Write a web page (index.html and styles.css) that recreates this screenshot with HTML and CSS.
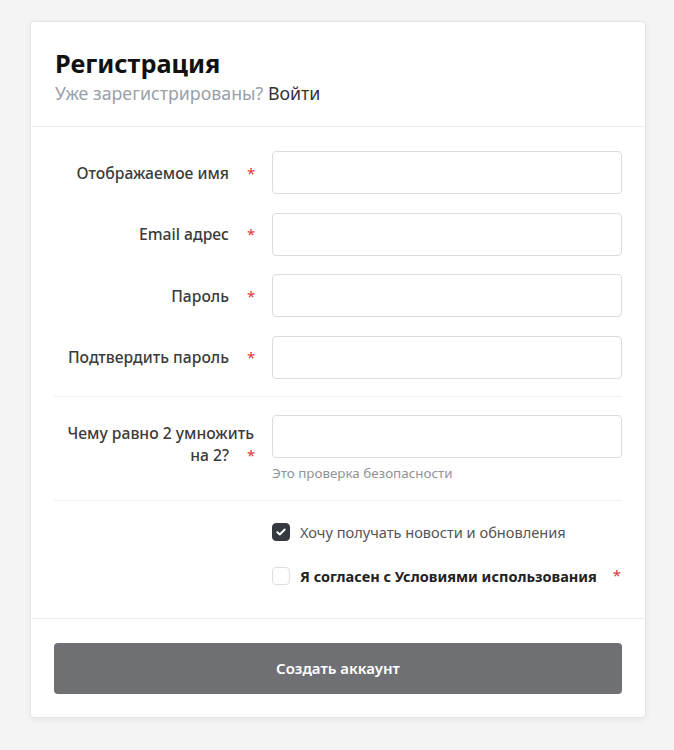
FILE: index.html
```html
<!DOCTYPE html>
<html lang="ru">
<head>
<meta charset="utf-8">
<title>Регистрация</title>
<link rel="stylesheet" href="styles.css">
</head>
<body>
<div class="card">
  <div class="card-header">
    <h1 class="title">Регистрация</h1>
    <div class="subtitle">Уже зарегистрированы? <a class="login" href="#">Войти</a></div>
  </div>
  <form class="card-body">
    <div class="group">
      <div class="row">
        <label class="label">Отображаемое имя<span class="req">*</span></label>
        <div class="field"><input class="input" type="text"></div>
      </div>
      <div class="row">
        <label class="label">Email адрес<span class="req">*</span></label>
        <div class="field"><input class="input" type="email"></div>
      </div>
      <div class="row">
        <label class="label">Пароль<span class="req">*</span></label>
        <div class="field"><input class="input" type="password"></div>
      </div>
      <div class="row">
        <label class="label">Подтвердить пароль<span class="req">*</span></label>
        <div class="field"><input class="input" type="password"></div>
      </div>
    </div>
    <div class="group group-captcha">
      <div class="row row-top">
        <label class="label label-multi">Чему равно 2 умножить<br>на 2?<span class="req">*</span></label>
        <div class="field">
          <input class="input" type="text">
          <div class="help">Это проверка безопасности</div>
        </div>
      </div>
    </div>
    <div class="group group-checks">
      <div class="check-row">
        <span class="box box-checked">
          <svg width="10" height="8" viewBox="0 0 10 8"><path d="M1.3 4.2 L3.8 6.5 L8.7 1.5" fill="none" stroke="#fff" stroke-width="1.9" stroke-linecap="round" stroke-linejoin="round"/></svg>
        </span>
        <span class="check-text">Хочу получать новости и обновления</span>
      </div>
      <div class="check-row">
        <span class="box"></span>
        <span class="check-text check-strong">Я согласен с Условиями использования</span>
        <span class="req req-check">*</span>
      </div>
    </div>
  </form>
  <div class="card-footer">
    <button class="btn" type="button">Создать аккаунт</button>
  </div>
</div>
</body>
</html>
```

FILE: styles.css
```css
* { box-sizing: border-box; }
html, body { margin: 0; }
body {
  background: #f4f4f4;
  font-family: "Noto Sans", "Open Sans", sans-serif;
  padding: 21px 28px 30px 30px;
}
.card {
  width: 616px;
  background: #fff;
  border: 1px solid #e4e4e4;
  border-radius: 4px;
  box-shadow: 0 2px 6px rgba(0,0,0,0.06);
}
.card-header {
  padding: 23px 24px 21px;
  border-bottom: 1px solid #ededed;
}
.title {
  margin: 0;
  font-size: 25.3px;
  font-weight: 700;
  line-height: 36px;
  color: #111;
}
.subtitle {
  font-size: 17.8px;
  line-height: 24px;
  color: #9aa0a8;
}
.login { color: #333; text-decoration: none; }
.card-body {
  margin: 0;
  padding: 0 23px 0 23px;
}
.group {
  display: flex;
  flex-direction: column;
  gap: 18.5px;
  padding: 24px 0 17px;
  border-bottom: 1px solid #f0f0f0;
}
.group-captcha { padding: 18px 0 19px; }
.group-checks {
  border-bottom: none;
  padding: 21px 0 32px;
  gap: 24px;
}
.row {
  display: flex;
  align-items: center;
  gap: 18px;
}
.row-top { align-items: flex-start; }
.label {
  width: 200px;
  flex: none;
  font-size: 15.7px;
  font-weight: 500;
  line-height: 22px;
  color: #3b3b3b;
  text-align: right;
}
.label-multi { padding-top: 7px; }
.req {
  display: inline-block;
  width: 7px;
  margin-left: 18px;
  color: #d9383a;
  font-size: 15px;
  font-weight: 400;
  line-height: 1;
  text-align: left;
}
.field { flex: 1; }
.input {
  display: block;
  width: 100%;
  height: 43px;
  border: 1px solid #dcdcdc;
  border-radius: 4px;
  background: #fff;
  font: inherit;
}
.help {
  margin-top: 7px;
  font-size: 13.4px;
  line-height: 16px;
  color: #8e9399;
}
.check-row {
  display: flex;
  align-items: center;
  padding-left: 218px;
  gap: 10px;
}
.box {
  width: 18px;
  height: 18px;
  flex: none;
  border: 1px solid #dedede;
  border-radius: 4px;
  background: #fff;
  display: flex;
  align-items: center;
  justify-content: center;
}
.box-checked {
  background: #353a42;
  border-color: #353a42;
}
.check-text {
  font-size: 14.6px;
  color: #555;
  white-space: nowrap;
}
.check-strong {
  font-size: 14.5px;
  font-weight: 700;
  color: #222;
}
.req-check { margin-left: 6px; }
.card-footer {
  border-top: 1px solid #ededed;
  padding: 24px 23px 23px;
}
.btn {
  display: block;
  width: 100%;
  height: 51px;
  border: none;
  border-radius: 4px;
  background: #6f7074;
  color: #fff;
  font-family: inherit;
  font-size: 15px;
  font-weight: 600;
}
```
